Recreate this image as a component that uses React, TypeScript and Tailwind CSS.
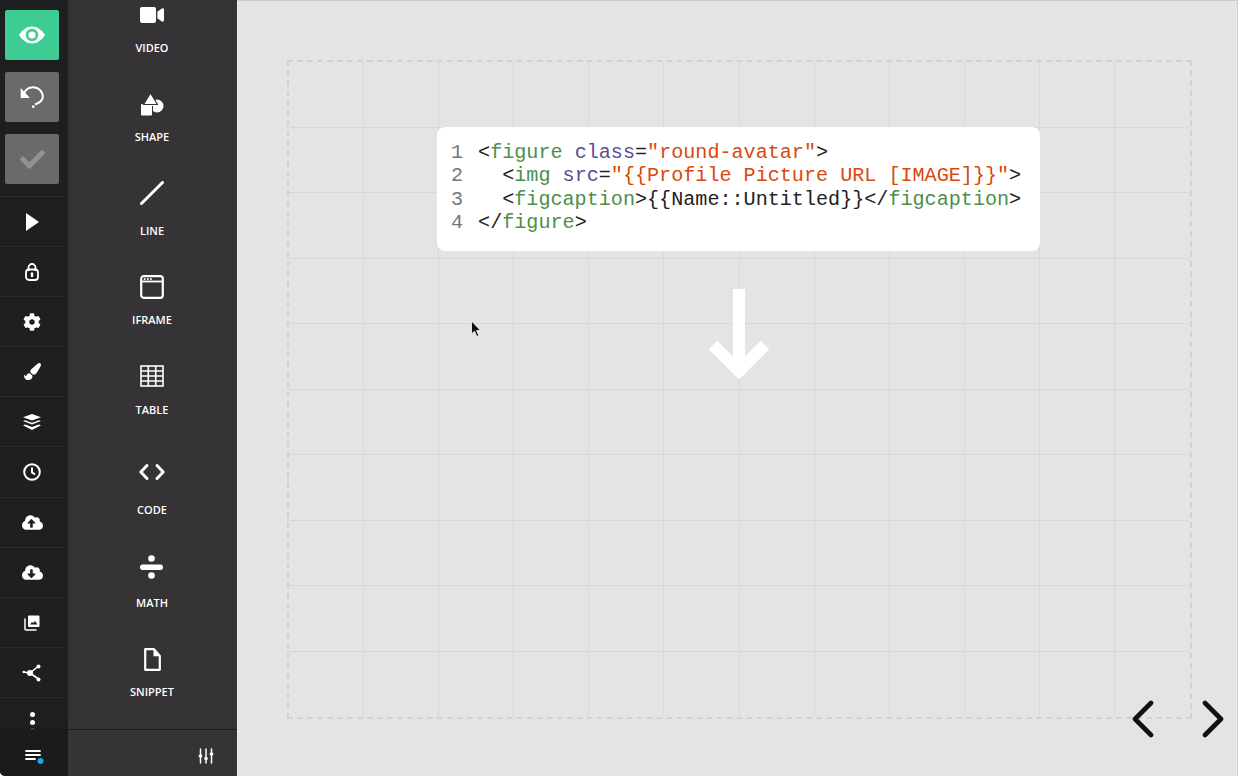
import React from "react";
import { FaCheck, FaCog, FaPaintBrush, FaVideo, FaCloudUploadAlt, FaCloudDownloadAlt } from "react-icons/fa";

const S = ({ w = 24, h = 24, vb = "0 0 24 24", children }: { w?: number; h?: number; vb?: string; children: React.ReactNode }) => (
  <svg width={w} height={h} viewBox={vb} fill="none">{children}</svg>
);

const Eye = () => (
  <S w={26} h={18} vb="0 0 26 18">
    <path d="M0 9C3.500 3.500 8 .5 13 .5S22.500 3.500 26 9c-3.500 5.500-8 8.500-13 8.500S3.500 14.500 0 9z" fill="#fff" />
    <circle cx="13" cy="9" r="6.200" fill="#3dcc92" />
    <circle cx="13" cy="9" r="3.600" fill="#fff" />
  </S>
);
const Undo = () => (
  <S w={26} h={26} vb="0 0 26 26">
    <path d="M1.700 4v10H11z" fill="#fff" />
    <path d="M4.500 10C6.500 5.500 10 3.200 14 3.200c5.500 0 9.800 4.300 9.800 9.800 0 3.200-1.800 5.200-7.800 7.500" stroke="#fff" strokeWidth="2" />
    <circle cx="14.300" cy="22.700" r="1.400" fill="#fff" />
  </S>
);
const Lock = () => (
  <S w={14} h={18} vb="0 0 14 18">
    <path d="M3.500 8V4.500a3.500 3.500 0 0 1 7 0V8" stroke="#fff" strokeWidth="1.800" />
    <rect x="1" y="6.500" width="12" height="10.500" rx="3" stroke="#fff" strokeWidth="1.800" />
    <path d="M7 10.500v2.500" stroke="#fff" strokeWidth="2.400" strokeLinecap="round" />
  </S>
);
const Play = () => (
  <S w={13} h={18} vb="0 0 13 18">
    <path d="M0 0l13 9L0 18z" fill="#fff" />
  </S>
);
const Layers = () => (
  <S w={18} h={16} vb="0 0 18 16">
    <path d="M9 0l9 3.200-9 3.400-9-3.400z" fill="#fff" />
    <path d="M0 7l2-.8 7 2.600 7-2.600 2 .8-9 3.400z" fill="#fff" />
    <path d="M0 11.300l2-.8 7 2.600 7-2.600 2 .8L9 16z" fill="#fff" />
  </S>
);
const Clock = () => (
  <S w={18} h={18} vb="0 0 18 18">
    <circle cx="9" cy="9" r="7.800" stroke="#fff" strokeWidth="2" />
    <path d="M9 4.600V9.400l3 2" stroke="#fff" strokeWidth="2" />
  </S>
);
const Gallery = () => (
  <S w={16} h={16} vb="0 0 16 16">
    <path d="M1 4v10a1 1 0 0 0 1 1h10" stroke="#fff" strokeWidth="1.500" strokeLinecap="round" />
    <path fillRule="evenodd" d="M5 0.500h9.500a1 1 0 0 1 1 1V11a1 1 0 0 1-1 1H5a1 1 0 0 1-1-1V1.500a1 1 0 0 1 1-1zM6 9.500h7.500L11 6 9.300 8 8 7z" fill="#fff" />
  </S>
);
const Share = () => (
  <S w={20} h={20} vb="0 0 20 20">
    <path d="M8 10L16 3.500M8 10l8.500 6M1.500 9l6 1" stroke="#fff" strokeWidth="1.600" />
    <circle cx="8" cy="10" r="3" fill="#fff" />
    <circle cx="16.500" cy="3.500" r="2" fill="#fff" />
    <circle cx="16.500" cy="16.500" r="2" fill="#fff" />
    <circle cx="1.800" cy="9" r="1.200" fill="#fff" />
  </S>
);
const Shape = () => (
  <S w={24} h={25} vb="0 0 24 25">
    <circle cx="17" cy="14" r="6.500" fill="#fff" />
    <rect x="1" y="12" width="11" height="11.500" rx="1" fill="#fff" />
    <path d="M10.500 1L17.500 12.500H3.500z" fill="#fff" stroke="#353336" strokeWidth="1.200" strokeLinejoin="round" />
    <path d="M12.500 14v9" stroke="#353336" strokeWidth="1" />
  </S>
);
const Line = () => (
  <S w={24} h={24} vb="0 0 24 24">
    <path d="M1.500 22.500L22.500 1.500" stroke="#fff" strokeWidth="3" strokeLinecap="round" />
  </S>
);
const Iframe = () => (
  <S w={24} h={24}>
    <rect x="1.200" y="1.200" width="21.600" height="21.600" rx="2.500" stroke="#fff" strokeWidth="2.200" />
    <path d="M1.500 6.500h21" stroke="#fff" strokeWidth="1.800" />
    <circle cx="4.700" cy="4" r="1" fill="#fff" />
    <circle cx="7.800" cy="4" r="1" fill="#fff" />
    <circle cx="10.900" cy="4" r="1" fill="#fff" />
  </S>
);
const Table = () => (
  <S w={24} h={22} vb="0 0 24 22">
    <rect x="1" y="1" width="22" height="20" stroke="#fff" strokeWidth="1.600" />
    <path d="M1 6h22M1 11h22M1 16h22M8.300 1v20M15.700 1v20" stroke="#fff" strokeWidth="1.600" />
  </S>
);
const Code = () => (
  <S w={30} h={20} vb="0 0 30 20">
    <path d="M10 3.500L3.800 10l6.200 6.500M20 3.500l6.200 6.500-6.200 6.500" stroke="#fff" strokeWidth="3" strokeLinecap="round" strokeLinejoin="round" />
  </S>
);
const MathIcon = () => (
  <S w={23} h={24} vb="0 0 23 24">
    <circle cx="11.500" cy="3.500" r="3.300" fill="#fff" />
    <rect x="0" y="9.500" width="23" height="5.500" rx="2.700" fill="#fff" />
    <circle cx="11.500" cy="20.500" r="3.300" fill="#fff" />
  </S>
);
const Snippet = () => (
  <S w={17} h={23} vb="0 0 17 23">
    <path d="M1.200 1.200h8.800l5.800 6.800v13.800H1.200z" stroke="#fff" strokeWidth="2.200" strokeLinejoin="round" />
    <path d="M9.500 1.200v7h6.300z" fill="#fff" />
  </S>
);
const ListDot = () => (
  <S w={20} h={16} vb="0 0 20 16">
    <path d="M1 2h14M1 6h14M1 10h9" stroke="#fff" strokeWidth="1.800" strokeLinecap="round" />
    <circle cx="15.500" cy="12" r="3" fill="#1ea7e8" />
  </S>
);
const Sliders = () => (
  <S w={16} h={16} vb="0 0 16 16">
    <path d="M2.500 1v14M8 1v14M13.500 1v14" stroke="#fff" strokeWidth="1.500" strokeLinecap="round" />
    <path d="M.8 8h3.400M6.300 10.500h3.400M11.800 6h3.400" stroke="#fff" strokeWidth="2.400" />
  </S>
);

const rail: [React.ReactNode, string][] = [
  [<Play />, "h-[50px]"],
  [<Lock />, "h-[50px]"],
  [<FaCog size={18} color="#fff" />, "h-[50px]"],
  [<FaPaintBrush size={17} color="#fff" />, "h-[50px]"],
  [<Layers />, "h-[50px]"],
  [<Clock />, "h-[51px]"],
  [<FaCloudUploadAlt size={21} color="#fff" />, "h-[50px]"],
  [<FaCloudDownloadAlt size={21} color="#fff" />, "h-[50px]"],
  [<Gallery />, "h-[50px]"],
  [<Share />, "h-[50px]"],
];

const tools: [React.ReactNode, string, string, string][] = [
  [<FaVideo size={24} color="#fff" />, "VIDEO", "h-[24px] mt-[3px]", "mt-[14px]"],
  [<Shape />, "SHAPE", "h-[25px] mt-[37px]", "mt-[13px]"],
  [<Line />, "LINE", "h-[24px] mt-[37px]", "mt-[19px]"],
  [<Iframe />, "IFRAME", "h-[24px] mt-[37px]", "mt-[14px]"],
  [<Table />, "TABLE", "h-[22px] mt-[38px]", "mt-[16px]"],
  [<Code />, "CODE", "h-[20px] mt-[45px]", "mt-[21px]"],
  [<MathIcon />, "MATH", "h-[24px] mt-[38px]", "mt-[17px]"],
  [<Snippet />, "SNIPPET", "h-[23px] mt-[38px]", "mt-[14px]"],
];

const G = "text-[#4c8f4d]";
const P = "text-[#5f4b94]";
const R = "text-[#d84a0c]";
const cells = Array.from({ length: 120 });

export default function App() {
  return (
    <div className="flex h-[776px] w-[1238px] overflow-hidden bg-white [font-family:'Open_Sans',sans-serif]">
      <aside className="relative flex h-full w-[68px] shrink-0 flex-col overflow-hidden rounded-bl-[5px] bg-[#1f1f21] pr-[4px]">
        <div className="flex flex-col gap-[12px] px-[5px] pt-[10px] pb-[12px]">
          <div className="flex h-[50px] items-center justify-center rounded-[2px] bg-[#3dcc92]"><Eye /></div>
          <div className="flex h-[50px] items-center justify-center rounded-[2px] bg-[#6a6a6a]"><Undo /></div>
          <div className="flex h-[50px] items-center justify-center rounded-[2px] bg-[#6a6a6a]"><FaCheck size={25} color="#929292" /></div>
        </div>
        {rail.map(([icon, h], i) => (
          <div key={i} className={`flex shrink-0 items-center justify-center border-t border-[#2b2b2d] ${h}`}>{icon}</div>
        ))}
        <div className="flex flex-col items-center gap-[3px] border-t border-[#2b2b2d] pt-[14px]">
          <span className="size-[5px] rounded-full bg-white" />
          <span className="size-[5px] rounded-full bg-white" />
          <span className="size-[5px] rounded-full bg-white" />
        </div>
        <div className="absolute right-0 bottom-0 left-0 flex h-[46px] items-center justify-center bg-[#1b1b1d] pt-[8px] pl-[1px] before:absolute before:-top-[6px] before:left-0 before:h-[6px] before:w-full before:bg-gradient-to-b before:from-transparent before:to-[#1b1b1d]">
          <ListDot />
        </div>
      </aside>

      <div className="relative h-full w-[169px] shrink-0 overflow-hidden bg-[#353336]">
        <div className="flex flex-col items-center pr-[1px]">
          {tools.map(([icon, label, iconCls, labelCls]) => (
            <div key={label} className="flex flex-col items-center">
              <div className={`flex items-center justify-center ${iconCls}`}>{icon}</div>
              <div className={`text-[11px] leading-[14px] font-semibold text-white ${labelCls}`}>{label}</div>
            </div>
          ))}
        </div>
        <div className="absolute right-0 bottom-0 left-0 flex h-[47px] items-center justify-end border-t border-[#1a1a1a] bg-[#353336] pt-[5px] pr-[23px]">
          <Sliders />
        </div>
      </div>

      <main className="relative h-full flex-1 border-t border-r border-l border-t-[#c9c9c9] border-r-[#d2d2d2] border-l-[#ececec] bg-[#e4e4e4] pt-[59px] pl-[49px]">
        <div className="grid h-[659px] w-[905px] grid-cols-12 grid-rows-10 border-2 border-dashed border-[#d2d2d2]">
          {cells.map((_, i) => (
            <div key={i} className={`border-[#d8d8d8] ${(i + 1) % 12 ? "border-r" : ""} ${i < 108 ? "border-b" : ""}`} />
          ))}
        </div>

        <div className="absolute top-[126px] left-[199px] h-[124px] w-[603px] rounded-[8px] bg-white pt-[14px] pl-[14px] text-[20.13px] leading-[23.4px] whitespace-pre text-[#222] [font-family:'Liberation_Mono',monospace]">
          <div><span className="mr-[15px] text-[#777]">1</span>&lt;<span className={G}>figure</span> <span className={P}>class</span>=<span className={R}>"round-avatar"</span>&gt;</div>
          <div><span className="mr-[15px] text-[#777]">2</span>  &lt;<span className={G}>img</span> <span className={P}>src</span>=<span className={R}>"{"{{Profile Picture URL [IMAGE]}}"}"</span>&gt;</div>
          <div><span className="mr-[15px] text-[#777]">3</span>  &lt;<span className={G}>figcaption</span>&gt;{"{{Name::Untitled}}"}&lt;/<span className={G}>figcaption</span>&gt;</div>
          <div><span className="mr-[15px] text-[#777]">4</span>&lt;/<span className={G}>figure</span>&gt;</div>
        </div>

        <div className="absolute top-[287px] left-[471px]">
          <svg width="60" height="94" viewBox="0 0 60 94" fill="none">
            <path d="M30 1v86" stroke="#fff" strokeWidth="12" />
            <path d="M4 57l26 26 26-26" stroke="#fff" strokeWidth="12" />
          </svg>
        </div>

        <div className="absolute top-[319px] left-[232px]">
          <svg width="12" height="18" viewBox="0 0 12 18">
            <path d="M1.500 1v13l3-2.800 2.300 5.300 2-.9-2.200-5.100h4z" fill="#111" stroke="#fff" strokeWidth=".8" />
          </svg>
        </div>

        <div className="absolute top-[699px] left-[893px]">
          <svg width="26" height="38" viewBox="0 0 26 38" fill="none">
            <path d="M20 3L4 19l16 16" stroke="#111" strokeWidth="4.600" strokeLinecap="round" strokeLinejoin="round" />
          </svg>
        </div>
        <div className="absolute top-[699px] left-[962px]">
          <svg width="26" height="38" viewBox="0 0 26 38" fill="none">
            <path d="M5 3l16 16L5 35" stroke="#111" strokeWidth="4.600" strokeLinecap="round" strokeLinejoin="round" />
          </svg>
        </div>
      </main>
    </div>
  );
}
